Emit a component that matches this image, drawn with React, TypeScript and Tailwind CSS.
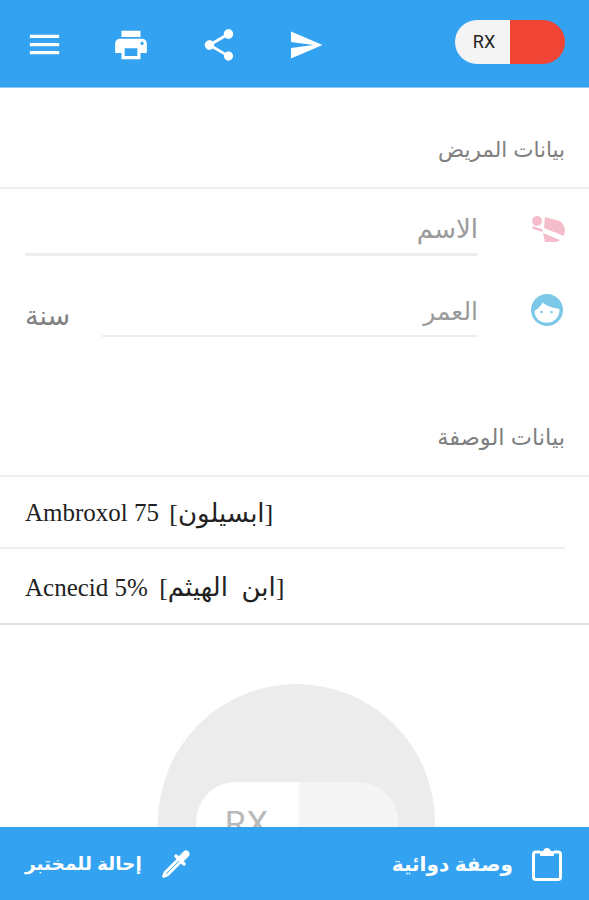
const ar = "font-['Liberation_Sans','DejaVu_Sans',sans-serif]";

function Icon({ d, size, className = "" }: { d: string; size: number; className?: string }) {
  return (
    <svg width={size} height={size} viewBox="0 0 24 24" fill="currentColor" className={className}>
      <path d={d} />
    </svg>
  );
}

const menu = "M3 18h18v-2H3v2zm0-5h18v-2H3v2zm0-7v2h18V6H3z";
const print = "M19 8H5c-1.66 0-3 1.34-3 3v6h4v4h12v-4h4v-6c0-1.66-1.34-3-3-3zm-3 11H8v-5h8v5zm3-7c-.55 0-1-.45-1-1s.45-1 1-1 1 .45 1 1-.45 1-1 1zm-1-9H6v4h12V3z";
const share = "M18 16.08c-.76 0-1.44.3-1.96.77L8.91 12.7c.05-.23.09-.46.09-.7s-.04-.47-.09-.7l7.05-4.11c.54.5 1.25.81 2.04.81 1.66 0 3-1.34 3-3s-1.34-3-3-3-3 1.34-3 3c0 .24.04.47.09.7L8.04 9.81C7.5 9.31 6.79 9 6 9c-1.66 0-3 1.34-3 3s1.34 3 3 3c.79 0 1.5-.31 2.04-.81l7.12 4.16c-.05.21-.08.43-.08.65 0 1.61 1.31 2.92 2.92 2.92 1.61 0 2.92-1.31 2.92-2.92s-1.31-2.92-2.92-2.92z";
const send = "M2.01 21L23 12 2.01 3 2 10l15 2-15 2z";

function Header() {
  return (
    <header className="h-[88px] shrink-0 bg-[#33a2f0] border-b border-[#8cc9f5] flex items-center pl-[25px] pr-[24px] text-white">
      <Icon d={menu} size={39} className="mt-[2px]" />
      <Icon d={print} size={38} className="ml-[48px] mt-[2px]" />
      <Icon d={share} size={38} className="ml-[50px] mt-[2px]" />
      <Icon d={send} size={36} className="ml-[50px] mt-[2px]" />
      <div className="ml-auto mb-[4px] flex h-[44px] w-[110px] overflow-hidden rounded-full">
        <div className="flex w-[55px] items-center justify-center bg-[#f4f4f4] pl-[3px] font-['Roboto',sans-serif] text-[18px] text-[#222]">RX</div>
        <div className="flex-1 bg-[#f04434]" />
      </div>
    </header>
  );
}

function Heading({ children, className }: { children: string; className: string }) {
  return (
    <h2 className={`h-[51px] border-b-2 border-[#eeeeee] pr-[24px] leading-[24px] font-normal text-[#808080] ${ar} ${className}`} dir="rtl">
      {children}
    </h2>
  );
}

function PatientIcon() {
  return (
    <svg width="34" height="26" viewBox="0 0 34 26" fill="#f5bccb">
      <circle cx="6" cy="5" r="5" />
      <path d="M14 1 L29 5 Q33 8 34 14 L33 20 L13 12 Z" />
      <path d="M1 10 L11 13 L12 16 L2 13 Z" />
      <path d="M12 17 L29 24 L26 26 L14 26 Z" />
    </svg>
  );
}

function FaceIcon() {
  return (
    <svg width="32" height="32" viewBox="0 0 32 32">
      <circle cx="16" cy="16" r="16" fill="#7cc8e8" />
      <path d="M3.500 17 C 7 15 10 12 11.500 8.500 C 15 12 22 14 28.500 15 C 29 23 23 28.800 16 28.800 C 9 28.800 3.500 24 3.500 17 Z" fill="#ffffff" />
      <circle cx="10.500" cy="18" r="1.300" fill="#7cc8e8" />
      <circle cx="20.500" cy="18" r="1.300" fill="#7cc8e8" />
    </svg>
  );
}

function Clipboard() {
  return (
    <svg width="30" height="34" viewBox="0 0 30 34" fill="none" stroke="#ffffff" strokeWidth="3" strokeLinejoin="round">
      <path d="M8 5 H4 Q1.500 5 1.500 7.500 V30 Q1.500 32.500 4 32.500 H26 Q28.500 32.500 28.500 30 V7.500 Q28.500 5 26 5 H22" />
      <path d="M9 8 V5 H12 Q12.500 2 15 2 Q17.500 2 18 5 H21 V8 Z" fill="#ffffff" strokeWidth="2" />
    </svg>
  );
}

function Dropper() {
  return (
    <svg width="30" height="30" viewBox="0 0 30 30" fill="none" stroke="#fff">
      <path d="M21 9 L25 5" strokeWidth="7" strokeLinecap="round" />
      <path d="M15 7 L23 15" strokeWidth="3.500" strokeLinecap="round" />
      <path d="M17 10.500 L4 23.500 L2.500 27.500 L6.500 26 L19.500 13" strokeWidth="2.800" strokeLinejoin="round" />
    </svg>
  );
}

export default function App() {
  return (
    <div className="flex h-[900px] w-full flex-col overflow-hidden bg-white">
      <Header />
      <main className="min-h-0 flex-1 overflow-hidden">
        <div className="pt-[50px]">
          <Heading className="text-[21.5px]">بيانات المريض</Heading>
        </div>
        <div dir="rtl" className={`flex h-[67px] items-end pr-[24px] ${ar}`}>
          <div className="flex h-[67px] w-[34px] shrink-0 items-center justify-center pt-[12px]"><PatientIcon /></div>
          <div className="mr-[53px] h-[65px] w-[453px] border-b-[3px] border-[#eeeeee] pt-[24px] text-[26px] leading-[28px] text-[#9a9a9a]">الاسم</div>
        </div>
        <div dir="rtl" className={`flex h-[81px] items-center pr-[24px] pl-[25px] ${ar}`}>
          <div className="flex w-[34px] shrink-0 items-center justify-center pt-[26px] pr-[2px]"><FaceIcon /></div>
          <div className="mr-[53px] h-[81px] w-[376px] border-b-[2px] border-[#eeeeee] pt-[41px] text-[25px] leading-[28px] text-[#9a9a9a]">العمر</div>
          <div className="mr-auto pt-[38px] text-[27px] leading-[28px] text-[#808080]">سنة</div>
        </div>
        <div className="pt-[89px]">
          <Heading className="text-[22.500px]">بيانات الوصفة</Heading>
        </div>
        <div className="font-['Liberation_Serif','DejaVu_Sans',serif] text-[25px] text-[#222]">
          <div className="mr-[24px] flex h-[72px] items-center border-b-2 border-[#eeeeee] pl-[25px] pt-[2px] whitespace-pre">Ambroxol 75 <span className="ml-[4px] text-[26px]">[ابسيلون]</span></div>
          <div className="flex h-[76px] items-center border-b-2 border-[#e2e2e2] pl-[25px] pt-[3px] whitespace-pre">Acnecid 5% <span className="ml-[5px] text-[26px] [word-spacing:7px]">[ابن الهيثم]</span></div>
        </div>
        <div className="ml-[158px] mt-[59px] flex h-[277px] w-[277px] justify-center rounded-full bg-[#ececec] pt-[98px]">
          <div className="flex h-[90px] w-[202px] overflow-hidden rounded-[40px]">
            <div className="flex w-[103px] justify-center bg-white pt-[23px] font-['Roboto',sans-serif] text-[34px] leading-[36px] tracking-[1px] text-[#b9b9b9]">RX</div>
            <div className="flex-1 bg-[#f5f5f5]" />
          </div>
        </div>
      </main>
      <footer className={`flex h-[73px] shrink-0 items-center justify-between bg-[#33a2f0] pl-[25px] pr-[27px] font-bold text-white ${ar}`}>
        <div className="flex items-center gap-[19px]">
          <span dir="rtl" className="text-[18.500px]">إحالة للمختبر</span>
          <Dropper />
        </div>
        <div className="flex items-center gap-[19px]">
          <span dir="rtl" className="text-[20px]">وصفة دوائية</span>
          <Clipboard />
        </div>
      </footer>
    </div>
  );
}
